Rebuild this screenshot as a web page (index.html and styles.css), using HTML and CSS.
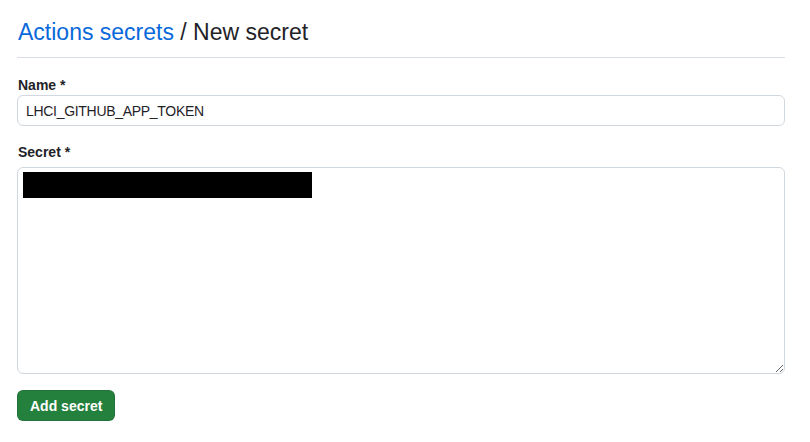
FILE: index.html
```html
<!DOCTYPE html>
<html lang="en">
<head>
<meta charset="utf-8">
<title>Actions secrets / New secret</title>
<link rel="stylesheet" href="styles.css">
</head>
<body>
<main class="page">
  <h2 class="subhead"><a class="crumb" href="#">Actions secrets</a> / New secret</h2>
  <form class="form">
    <div class="group">
      <label class="label label-name" for="name">Name *</label>
      <input class="input" id="name" type="text" value="LHCI_GITHUB_APP_TOKEN">
    </div>
    <div class="group">
      <label class="label label-secret" for="secret">Secret *</label>
      <div class="area-wrap">
        <textarea class="textarea" id="secret"></textarea>
        <div class="redact"></div>
      </div>
    </div>
    <button class="btn" type="button">Add secret</button>
  </form>
</main>
</body>
</html>
```
FILE: styles.css
```css
* { box-sizing: border-box; }
html, body { margin: 0; padding: 0; background: #fff; }
body {
  font-family: "Liberation Sans", Arial, Helvetica, sans-serif;
  color: #1f2328;
}
.page {
  width: 768px;
  margin-left: 17px;
}
.subhead {
  margin: 14px 0 0;
  padding: 0 0 7px 1px;
  font-size: 23px;
  font-weight: 400;
  line-height: 36px;
  border-bottom: 1px solid #d8dee4;
}
.crumb {
  color: #0969da;
  text-decoration: none;
}
.form {
  display: flex;
  flex-direction: column;
  align-items: flex-start;
}
.group {
  margin-top: 17px;
  width: 100%;
  display: flex;
  flex-direction: column;
}
.group:first-child { margin-top: 18px; }
.label {
  font-size: 14px;
  font-weight: 700;
  line-height: 19px;
  padding-left: 1px;
}
.label-secret { margin-bottom: 5px; }
.input {
  width: 100%;
  height: 31px;
  padding: 0 8px;
  font-family: "Liberation Sans", Arial, Helvetica, sans-serif;
  font-size: 14px;
  letter-spacing: -0.3px;
  color: #1f2328;
  background: #fff;
  border: 1px solid #d0d7de;
  border-radius: 6px;
  outline: none;
}
.area-wrap {
  position: relative;
  width: 100%;
  height: 207px;
}
.textarea {
  display: block;
  width: 100%;
  height: 207px;
  padding: 5px 8px;
  font-family: "Liberation Sans", Arial, Helvetica, sans-serif;
  font-size: 14px;
  background: #fff;
  border: 1px solid #d0d7de;
  border-radius: 6px;
  outline: none;
  resize: vertical;
}
.redact {
  position: absolute;
  left: 6px;
  top: 5px;
  width: 289px;
  height: 26px;
  background: #000;
}
.btn {
  margin-top: 16px;
  height: 31px;
  padding: 0 12px;
  font-family: "Liberation Sans", Arial, Helvetica, sans-serif;
  font-size: 14px;
  font-weight: 700;
  color: #fff;
  background: #24803d;
  border: 1px solid rgba(31, 35, 40, 0.15);
  border-radius: 6px;
  cursor: pointer;
}
```
